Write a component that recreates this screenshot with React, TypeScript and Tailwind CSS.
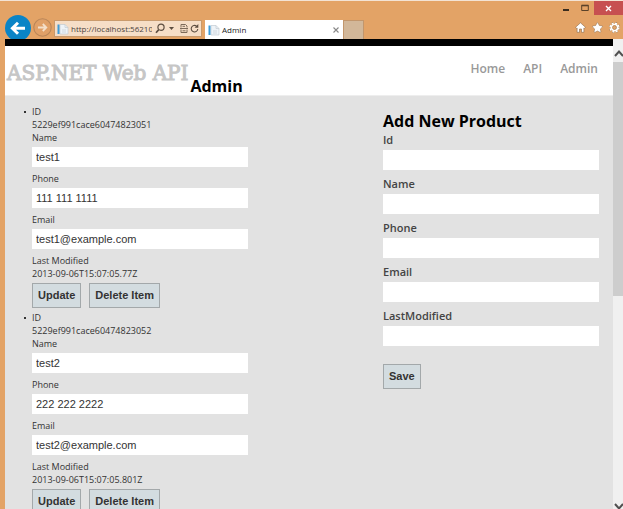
import { FaStar } from "react-icons/fa";

interface Product {
  id: string;
  name: string;
  phone: string;
  email: string;
  lastModified: string;
}

const products: Product[] = [
  {
    id: "5229ef991cace60474823051",
    name: "test1",
    phone: "111 111 1111",
    email: "test1@example.com",
    lastModified: "2013-09-06T15:07:05.77Z",
  },
  {
    id: "5229ef991cace60474823052",
    name: "test2",
    phone: "222 222 2222",
    email: "test2@example.com",
    lastModified: "2013-09-06T15:07:05.801Z",
  },
];

const PageIcon = () => (
  <svg width="12" height="12" viewBox="0 0 12 12" className="shrink-0">
    <path d="M3 1.5h5l3 3V11H3z" fill="#eef3f7" stroke="#c3ccd3" strokeWidth="0.7" />
    <path d="M8 1.5v3h3M5 7h4M5 9h4" fill="none" stroke="#c3ccd3" strokeWidth="0.7" />
    <path d="M0.5 1.5h2V11h-2z" fill="#3d9bd6" />
  </svg>
);

const TitleBar = () => (
  <div className="flex h-[14px] justify-end">
    <button aria-label="Minimize" className="flex w-[18px] items-center justify-center">
      <svg width="8" height="10" viewBox="0 0 8 10">
        <path d="M1 7h6" stroke="#3a2c1e" strokeWidth="2" />
      </svg>
    </button>
    <button aria-label="Maximize" className="flex w-[19px] items-center justify-center">
      <svg width="8" height="8" viewBox="0 0 8 8">
        <path d="M0.7 1.5h6.6v5H0.7z" fill="none" stroke="#5a4229" strokeWidth="1" />
        <path d="M0.5 1.5h7" stroke="#5a4229" strokeWidth="1.6" />
      </svg>
    </button>
    <button aria-label="Close" className="flex w-[29px] items-center justify-center bg-[#c75050]">
      <svg width="7" height="7" viewBox="0 0 7 7">
        <path d="M1 1l5 5M6 1L1 6" stroke="#fff" strokeWidth="1.4" />
      </svg>
    </button>
  </div>
);

const Toolbar = () => (
  <div className="flex h-6 items-start pl-[5px]">
    <button aria-label="Back" className="shrink-0">
      <svg width="26" height="26" viewBox="0 0 26 26">
        <circle cx="13" cy="13" r="13" fill="#0a84c6" />
        <path
          d="M20 13.2H8M13 7.7l-5.6 5.5 5.6 5.5"
          fill="none"
          stroke="#fff"
          strokeWidth="3"
        />
      </svg>
    </button>
    <button aria-label="Forward" className="ml-[2px] mt-[3px] shrink-0">
      <svg width="19" height="19" viewBox="0 0 19 19">
        <circle cx="9.5" cy="9.5" r="8.7" fill="#e0a067" stroke="#b98659" strokeWidth="1.1" />
        <path
          d="M5 9.5h8M9.8 6l3.5 3.5L9.8 13"
          fill="none"
          stroke="#f4dfc9"
          strokeWidth="1.8"
        />
      </svg>
    </button>
    <div className="ml-[2px] mt-[5px] flex h-[17px] w-[148px] shrink-0 items-center border border-[#c99a6c] bg-[#f6dec7] pl-[2px]">
      <PageIcon />
      <input
        type="text"
        aria-label="Address"
        defaultValue="http://localhost:56210/"
        className="ml-[2px] h-[14px] w-[81px] bg-transparent text-[8px] text-[#4b4540] outline-none"
      />
      <button aria-label="Search" className="ml-[3px] shrink-0">
        <svg width="10" height="11" viewBox="0 0 10 11">
          <circle cx="6" cy="4.2" r="3.1" fill="none" stroke="#5c4d40" strokeWidth="1.2" />
          <path d="M3.8 6.6L1 9.8" stroke="#5c4d40" strokeWidth="1.6" />
        </svg>
      </button>
      <button aria-label="Show history" className="ml-1 shrink-0">
        <svg width="5" height="3" viewBox="0 0 5 3">
          <path d="M0 0h5L2.5 3z" fill="#5c4d40" />
        </svg>
      </button>
      <button aria-label="Compatibility view" className="ml-[6px] shrink-0">
        <svg width="8" height="9" viewBox="0 0 8 9">
          <path
            d="M1 3.5V0.5h4.5L7 2v1.5M1 5.5v3h6v-3M0 4.5h8M2.5 2.3h2.5M2.5 6.8h3"
            fill="none"
            stroke="#7c6a59"
            strokeWidth="1"
          />
        </svg>
      </button>
      <button aria-label="Refresh" className="ml-[2px] shrink-0">
        <svg width="9" height="9" viewBox="0 0 9 9">
          <path d="M7.8 5a3.3 3.3 0 1 1-1.3-3" fill="none" stroke="#5c4d40" strokeWidth="1.1" />
          <path d="M8.3 0v3.8H4.6z" fill="#5c4d40" />
        </svg>
      </button>
    </div>
    <div className="ml-[3px] mt-[5px] flex h-[19px] w-[138px] items-center bg-white pl-[3px] pr-[4px]">
      <PageIcon />
      <span className="ml-[2px] text-[8px] text-[#222]">Admin</span>
      <button aria-label="Close tab" className="ml-auto">
        <svg width="6" height="6" viewBox="0 0 6 6">
          <path d="M0.5 0.5l5 5M5.5 0.5l-5 5" stroke="#888" strokeWidth="1.1" />
        </svg>
      </button>
    </div>
    <button
      aria-label="New tab"
      className="mt-[5px] h-[19px] w-[21px] shrink-0 border border-b-0 border-[#c2966c] bg-[#d2b799]"
    />
    <div className="ml-auto flex items-center gap-[6px] pr-[3px] pt-[7px] text-white">
      <button aria-label="Home">
        <svg width="11" height="11" viewBox="0 0 11 11">
          <path
            d="M5.5 0.8L0.6 5.2l1 1.2.5-.4v4.3h2.4V7h2v3.3h2.4V6l.5.4 1-1.2z"
            fill="#fff"
            stroke="#8a6a4a"
            strokeWidth="0.6"
          />
        </svg>
      </button>
      <button aria-label="Favorites">
        <FaStar size={11} stroke="#8a6a4a" strokeWidth={25} />
      </button>
      <button aria-label="Tools">
        <svg width="11" height="11" viewBox="0 0 11 11">
          <circle cx="5.5" cy="5.5" r="4.5" fill="none" stroke="#8a6a4a" strokeWidth="2" strokeDasharray="2 1.53" />
          <circle cx="5.5" cy="5.5" r="4.4" fill="none" stroke="#fff" strokeWidth="1.5" strokeDasharray="2 1.46" />
          <circle cx="5.5" cy="5.5" r="3" fill="none" stroke="#fff" strokeWidth="1.7" />
          <circle cx="5.5" cy="5.5" r="2" fill="none" stroke="#8a6a4a" strokeWidth="0.5" />
        </svg>
      </button>
    </div>
  </div>
);

interface FieldProps {
  id: string;
  label: string;
  value: string;
}

const ItemField = ({ id, label, value }: FieldProps) => (
  <div className="mb-[5px]">
    <label htmlFor={id} className="mb-[3px] block">
      {label}
    </label>
    <input
      id={id}
      type="text"
      defaultValue={value}
      className="block h-5 w-full bg-white px-1 font-['Liberation_Sans',sans-serif] text-[11px] text-[#333] outline-none"
    />
  </div>
);

const buttonClass =
  "h-[25px] border border-[#a3a8aa] bg-[#d3dce0] px-[5px] font-['Liberation_Sans',sans-serif] text-[11px] font-bold text-[#333]";

const ProductItem = ({ product }: { product: Product }) => (
  <li className="mb-[3px]">
    <div className="-ml-2 flex items-center gap-[6px]">
      <span className="size-[2px] bg-[#333]" />
      ID
    </div>
    <div>{product.id}</div>
    <ItemField id={`name-${product.id}`} label="Name" value={product.name} />
    <ItemField id={`phone-${product.id}`} label="Phone" value={product.phone} />
    <ItemField id={`email-${product.id}`} label="Email" value={product.email} />
    <div>Last Modified</div>
    <div>{product.lastModified}</div>
    <div className="mt-[3px] flex gap-2">
      <button className={buttonClass}>Update</button>
      <button className={buttonClass}>Delete Item</button>
    </div>
  </li>
);

const newProductFields = ["Id", "Name", "Phone", "Email", "LastModified"];

const NewProductForm = () => (
  <form className="w-[216px] pt-1" onSubmit={(e) => e.preventDefault()}>
    <h2 className="text-[16px] font-bold leading-6 text-black">Add New Product</h2>
    {newProductFields.map((field) => (
      <div key={field} className="mb-[7px]">
        <label
          htmlFor={`new-${field}`}
          className="mb-[3px] block text-[11px] font-semibold leading-[14px] text-[#444]"
        >
          {field}
        </label>
        <input
          id={`new-${field}`}
          type="text"
          className="block h-5 w-full bg-white px-1 text-[11px] outline-none"
        />
      </div>
    ))}
    <button className={`${buttonClass} mt-[11px]`}>Save</button>
  </form>
);

const Scrollbar = () => (
  <div className="flex w-[10px] shrink-0 flex-col overflow-hidden bg-[#f0f0f0]">
    <svg width="10" height="23" viewBox="0 0 10 23" className="shrink-0">
      <path d="M2 17l4-4.5 4 4.5" fill="none" stroke="#505050" strokeWidth="2" />
    </svg>
    <div className="min-h-0 flex-1">
      <div className="h-[53%] bg-[#cdcdcd]" />
    </div>
    <svg width="10" height="6" viewBox="0 0 10 6" className="shrink-0">
      <path d="M2 1l4 4.5 4-4.5" fill="none" stroke="#505050" strokeWidth="2" />
    </svg>
  </div>
);

export default function App() {
  return (
    <div className="flex h-screen flex-col overflow-hidden border-t border-[#f3e3d4] bg-[#e3a366] font-['Open_Sans',sans-serif]">
      <TitleBar />
      <Toolbar />
      <div className="z-10 flex min-h-0 flex-1 pl-[5px]">
        <div className="min-w-0 flex-1 overflow-hidden bg-[#e2e2e2]">
          <header className="flex h-[57px] border-b border-[#eee] border-t-[7px] border-t-black bg-white pl-[2px] pr-[15px]">
            <a
              href="#"
              className="pt-[15px] font-['DejaVu_Serif',serif] text-[20px] leading-6 text-[#c6c6c6] [-webkit-text-stroke:1px_#c6c6c6]"
            >
              ASP.NET Web API
            </a>
            <h1 className="ml-[2px] self-end pb-px text-[16px] font-bold leading-4 text-black">Admin</h1>
            <nav className="ml-auto flex gap-[18px] pt-[15px] text-[12px] font-semibold leading-4 text-[#999]">
              <a href="#">Home</a>
              <a href="#">API</a>
              <a href="#">Admin</a>
            </nav>
          </header>
          <main className="flex justify-between pl-[27px] pr-[14px] pt-[9px]">
            <ul className="w-[216px] text-[9px] leading-[13px] text-[#333]">
              {products.map((product) => (
                <ProductItem key={product.id} product={product} />
              ))}
            </ul>
            <NewProductForm />
          </main>
        </div>
        <Scrollbar />
      </div>
    </div>
  );
}
